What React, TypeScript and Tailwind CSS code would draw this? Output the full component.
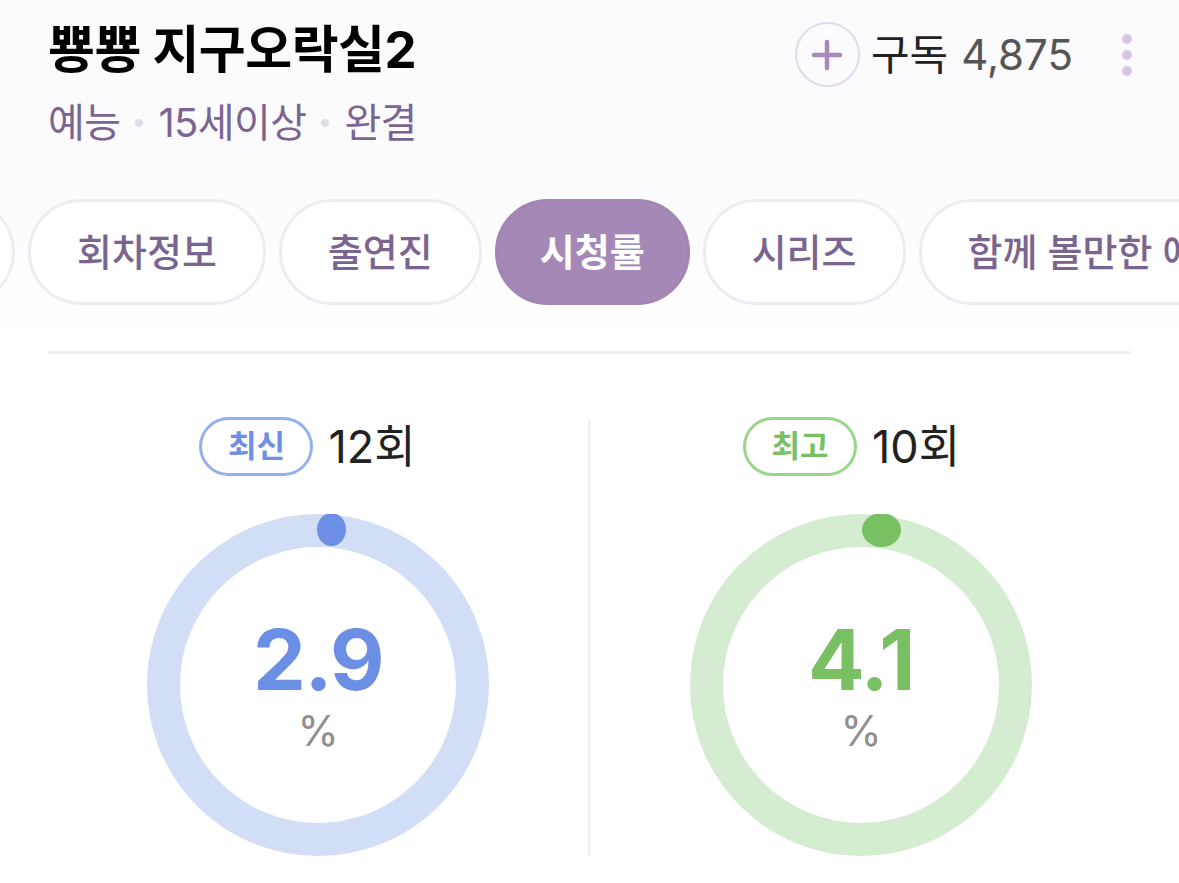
import React from "react";

const FONT = 'Inter, "Noto Sans CJK KR", "Noto Sans", sans-serif';

function Ring({
  track,
  dot,
  cx,
  cy,
  rx,
  ry,
  value,
  valueColor,
}: {
  track: string;
  dot: string;
  cx: number;
  cy: number;
  rx: number;
  ry: number;
  value: string;
  valueColor: string;
}) {
  return (
    <div className="relative w-[342px] h-[342px]">
      <svg width="342" height="342" viewBox="0 0 342 342">
        <circle cx="171" cy="171" r="154.5" fill="none" stroke={track} strokeWidth="33" />
        <ellipse cx={cx} cy={cy} rx={rx} ry={ry} fill={dot} />
      </svg>
      <div className="absolute inset-0 flex flex-col items-center justify-center">
        <div className={`text-[84px] font-bold leading-none tracking-[-1.5px] ${valueColor}`}>{value}</div>
        <div className="mt-[8px] text-[42px] leading-none text-[#8f8f8f]">%</div>
      </div>
    </div>
  );
}

export default function App() {
  const tabs = ["회차정보", "출연진", "시청률", "시리즈", "함께 볼만한 에피소드"];
  return (
    <div
      className="w-[1179px] h-[883px] overflow-hidden bg-white"
      style={{ fontFamily: FONT }}
    >
      <div className="bg-gradient-to-b from-[#fbfbfd] via-[#fbfbfd] to-white pb-[46px]">
        {/* header */}
        <div className="flex items-start justify-between pl-[48px] pr-[47px] pt-[20px]">
          <div>
            <h1 className="text-[51px] font-bold leading-[60px] tracking-[-0.5px] text-black">
              뿅뿅 지구오락실2
            </h1>
            <div className="mt-[19px] flex items-center text-[40px] leading-[48px] text-[#7b6590] tracking-[-0.6px]">
              <span>예능</span>
              <span className="mx-[15px] inline-block w-[8px] h-[8px] rounded-full bg-[#e2dae9]" />
              <span>15세이상</span>
              <span className="mx-[15px] inline-block w-[8px] h-[8px] rounded-full bg-[#e2dae9]" />
              <span>완결</span>
            </div>
          </div>
          <div className="flex items-center mt-[2px]">
            <div className="w-[65px] h-[65px] rounded-full border-2 border-[#e4d9ec] flex items-center justify-center">
              <svg width="32" height="32" viewBox="0 0 32 32">
                <path d="M16 3v26M3 16h26" stroke="#a887bb" strokeWidth="4.5" strokeLinecap="round" />
              </svg>
            </div>
            <span className="ml-[11px] text-[42px] leading-none text-[#222222]">구독</span>
            <span className="ml-[13px] text-[42px] leading-none text-[#555555]">4,875</span>
            <div className="ml-[49px] flex flex-col gap-[6px]">
              <span className="w-[10px] h-[10px] rounded-full bg-[#d8c6e1]" />
              <span className="w-[10px] h-[10px] rounded-full bg-[#d8c6e1]" />
              <span className="w-[10px] h-[10px] rounded-full bg-[#d8c6e1]" />
            </div>
          </div>
        </div>

        {/* tabs */}
        <div className="mt-[52px] flex gap-[13px] whitespace-nowrap">
          <div className="ml-[-185px] shrink-0 h-[106px] w-[200px] rounded-full border-[3px] border-[#f0ebf3] bg-white" />
          {tabs.map((t) =>
            t === "시청률" ? (
              <div
                key={t}
                className="shrink-0 h-[106px] px-[42px] rounded-full border-[3px] border-[#a285b2] bg-[#a688b6] flex items-center text-[38px] font-bold text-white"
              >
                {t}
              </div>
            ) : (
              <div
                key={t}
                className="shrink-0 h-[106px] px-[46px] rounded-full border-[3px] border-[#f0ebf3] bg-white flex items-center text-[38px] font-medium text-[#7b6590]"
              >
                {t}
              </div>
            )
          )}
        </div>
      </div>

      <div className="mx-[48px] h-[3px] bg-[#f1f0f4]" />

      {/* ratings */}
      <div className="mx-[48px] mt-[63px] flex">
        <div className="flex-1 flex flex-col items-center">
          <div className="flex items-center pr-[21px]">
            <div className="h-[59px] w-[114px] rounded-full border-[3px] border-[#95b0ee] flex items-center justify-center text-[31px] font-bold text-[#6d8fe5]">
              최신
            </div>
            <span className="ml-[15px] text-[45px] leading-none text-[#222222]">12회</span>
          </div>
          <div className="mt-[38px]">
            <Ring
              track="#d2ddf6"
              dot="#6e8fe6"
              cx={184.5}
              cy={15.5}
              rx={14.5}
              ry={16.5}
              value="2.9"
              valueColor="text-[#6c8fe6]"
            />
          </div>
        </div>
        <div className="w-[3px] mt-[3px] bg-[#f0f0f0]" />
        <div className="flex-1 flex flex-col items-center">
          <div className="flex items-center pr-[19px]">
            <div className="h-[59px] w-[114px] rounded-full border-[3px] border-[#9ad58c] flex items-center justify-center text-[31px] font-bold text-[#79c062]">
              최고
            </div>
            <span className="ml-[15px] text-[45px] leading-none text-[#222222]">10회</span>
          </div>
          <div className="mt-[38px]">
            <Ring
              track="#d4ecd0"
              dot="#78c061"
              cx={191.5}
              cy={16}
              rx={19.5}
              ry={17}
              value="4.1"
              valueColor="text-[#79c062]"
            />
          </div>
        </div>
      </div>
    </div>
  );
}
